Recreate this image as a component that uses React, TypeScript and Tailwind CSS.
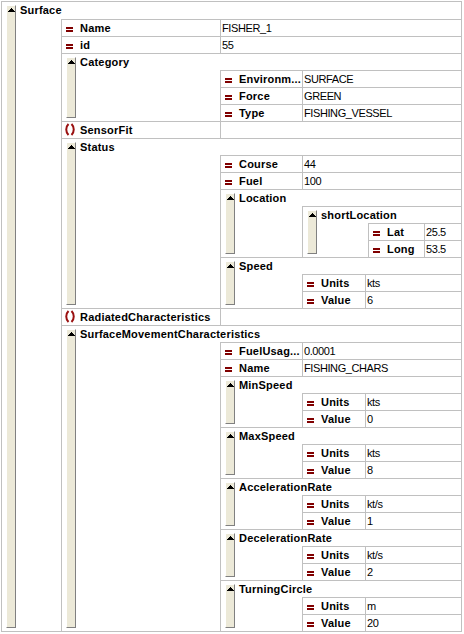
import React from 'react';

type N =
  | { t: 'a'; n: string; v: string }
  | { t: 'e'; n: string }
  | { t: 'b'; n: string; w: number; c: N[] };

const colClass: Record<number, string> = {
  59: 'grid-cols-[59px_1fr]',
  158: 'grid-cols-[158px_1fr]',
  81: 'grid-cols-[81px_1fr]',
  62: 'grid-cols-[62px_1fr]',
  65: 'grid-cols-[65px_1fr]',
  55: 'grid-cols-[55px_1fr]',
};
const wClass: Record<number, string> = {
  59: 'w-[59px]',
  158: 'w-[158px]',
  81: 'w-[81px]',
  62: 'w-[62px]',
  65: 'w-[65px]',
  55: 'w-[55px]',
};

const uv = (v: string): N[] => [
  { t: 'a', n: 'Units', v: v.split('|')[0] },
  { t: 'a', n: 'Value', v: v.split('|')[1] },
];

const data: N = {
  t: 'b',
  n: 'Surface',
  w: 158,
  c: [
    { t: 'a', n: 'Name', v: 'FISHER_1' },
    { t: 'a', n: 'id', v: '55' },
    {
      t: 'b',
      n: 'Category',
      w: 81,
      c: [
        { t: 'a', n: 'Environm...', v: 'SURFACE' },
        { t: 'a', n: 'Force', v: 'GREEN' },
        { t: 'a', n: 'Type', v: 'FISHING_VESSEL' },
      ],
    },
    { t: 'e', n: 'SensorFit' },
    {
      t: 'b',
      n: 'Status',
      w: 81,
      c: [
        { t: 'a', n: 'Course', v: '44' },
        { t: 'a', n: 'Fuel', v: '100' },
        {
          t: 'b',
          n: 'Location',
          w: 65,
          c: [
            {
              t: 'b',
              n: 'shortLocation',
              w: 55,
              c: [
                { t: 'a', n: 'Lat', v: '25.5' },
                { t: 'a', n: 'Long', v: '53.5' },
              ],
            },
          ],
        },
        { t: 'b', n: 'Speed', w: 62, c: uv('kts|6') },
      ],
    },
    { t: 'e', n: 'RadiatedCharacteristics' },
    {
      t: 'b',
      n: 'SurfaceMovementCharacteristics',
      w: 81,
      c: [
        { t: 'a', n: 'FuelUsag...', v: '0.0001' },
        { t: 'a', n: 'Name', v: 'FISHING_CHARS' },
        { t: 'b', n: 'MinSpeed', w: 62, c: uv('kts|0') },
        { t: 'b', n: 'MaxSpeed', w: 62, c: uv('kts|8') },
        { t: 'b', n: 'AccelerationRate', w: 62, c: uv('kt/s|1') },
        { t: 'b', n: 'DecelerationRate', w: 62, c: uv('kt/s|2') },
        { t: 'b', n: 'TurningCircle', w: 62, c: uv('m|20') },
      ],
    },
  ],
};

const Arrow = () => (
  <svg width="7" height="4" viewBox="0 0 7 4" shapeRendering="crispEdges" className="block">
    <rect x="3" y="0" width="1" height="1" fill="#000" />
    <rect x="2" y="1" width="3" height="1" fill="#000" />
    <rect x="1" y="2" width="5" height="1" fill="#000" />
    <rect x="0" y="3" width="7" height="1" fill="#000" />
  </svg>
);

const EqIcon = () => (
  <svg width="7" height="16" viewBox="0 0 7 16" shapeRendering="crispEdges" className="block">
    <rect x="0" y="7" width="7" height="2" fill="#800000" />
    <rect x="0" y="10" width="7" height="2" fill="#800000" />
  </svg>
);

const ParenIcon = () => (
  <svg width="12" height="16" viewBox="0 0 12 16" className="block">
    <path d="M4.5 2 C1.5 5 1.5 10 4.5 13" fill="none" stroke="#9a1010" strokeWidth="2" />
    <path d="M7.5 2 C10.5 5 10.5 10 7.5 13" fill="none" stroke="#9a1010" strokeWidth="2" />
  </svg>
);

const Row = ({ node, w, top }: { node: N; w: number; top?: boolean }) => {
  if (node.t === 'b') {
    return (
      <div
        className={`grid ${colClass[w]} ${top ? 'grid-rows-[17px_auto]' : 'grid-rows-[16px_auto]'} border-t border-[#c0c0c0]`}
      >
        <div className="col-start-1 row-start-1 row-span-2 ml-[4px] mt-[3px] mb-[3px] w-[10px] bg-[#ece9d8] border border-l-white border-t-white border-r-[#808080] border-b-[#808080] flex flex-col items-center pt-[2px]">
          <Arrow />
        </div>
        <div
          className={`col-start-1 col-span-2 row-start-1 pl-[18px] ${top ? 'leading-[17px]' : 'leading-[16px]'} font-bold tracking-[0.2px] whitespace-nowrap`}
        >
          {node.n}
        </div>
        <div className="col-start-2 row-start-2 min-w-0">
          <Table rows={node.c} w={node.w} />
        </div>
      </div>
    );
  }
  return (
    <div className="flex h-[17px] border-t border-[#c0c0c0]">
      <div className={`${wClass[w]} shrink-0 flex overflow-hidden`}>
        {node.t === 'a' ? (
          <div className="w-[18px] shrink-0 pl-[4px]">
            <EqIcon />
          </div>
        ) : (
          <div className="w-[18px] shrink-0 pl-[2px]">
            <ParenIcon />
          </div>
        )}
        <span className="font-bold tracking-[0.2px] leading-[16px] whitespace-nowrap">{node.n}</span>
      </div>
      <div className="flex-1 min-w-0 border-l border-[#c0c0c0] pl-[1px] leading-[16px] tracking-[-0.4px] whitespace-nowrap overflow-hidden">
        {node.t === 'a' ? node.v : ''}
      </div>
    </div>
  );
};

const Table = ({ rows, w }: { rows: N[]; w: number }) => (
  <div className="flex flex-col border-l border-[#c0c0c0]">
    {rows.map((r, i) => (
      <Row key={i} node={r} w={w} />
    ))}
  </div>
);

export default function App() {
  return (
    <div className="w-[464px] h-[634px] bg-white font-['Liberation_Sans',Arial,sans-serif] text-[11px] text-black overflow-hidden">
      <div className="ml-[1px] mt-[1px] w-[461px] border-l border-r border-b border-[#c0c0c0]">
        <Row node={data} w={59} top />
      </div>
    </div>
  );
}
